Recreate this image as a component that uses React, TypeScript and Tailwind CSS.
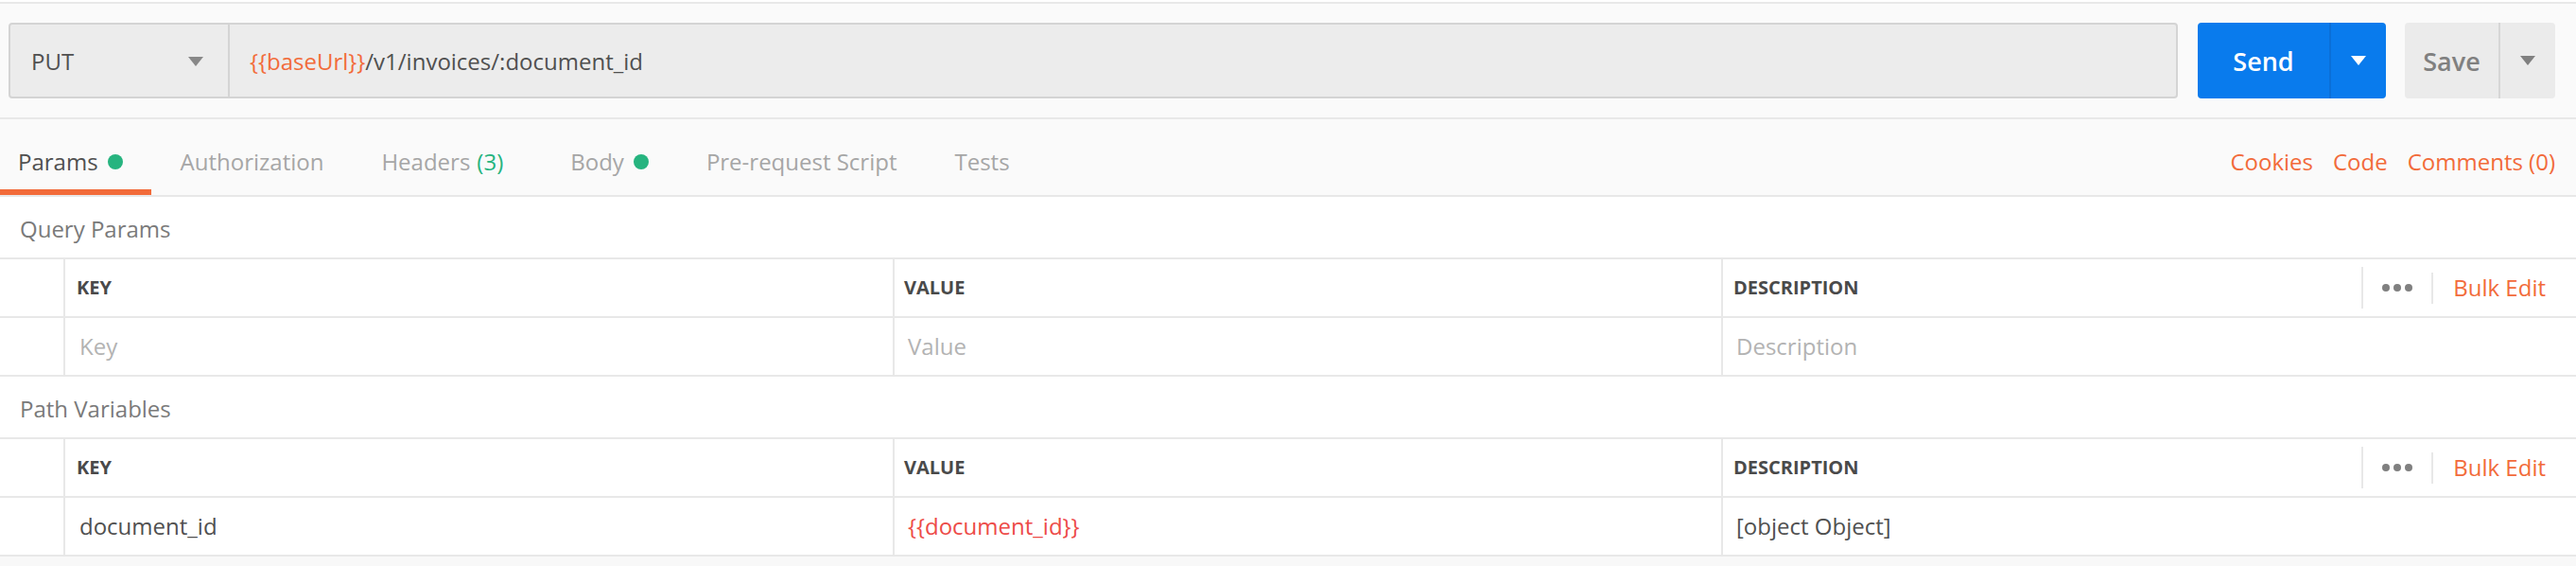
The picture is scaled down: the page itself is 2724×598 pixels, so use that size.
import React from "react";

const Caret = ({ color }: { color: string }) => (
  <svg width="16" height="10" viewBox="0 0 16 10">
    <polygon points="0,0 16,0 8,10" fill={color} />
  </svg>
);

const Dots = () => (
  <div className="flex items-center gap-[4px]">
    <span className="w-[8px] h-[8px] rounded-full bg-[#808080]" />
    <span className="w-[8px] h-[8px] rounded-full bg-[#808080]" />
    <span className="w-[8px] h-[8px] rounded-full bg-[#808080]" />
  </div>
);

type Row = { key: React.ReactNode; value: React.ReactNode; description: React.ReactNode };

const ParamTable = ({ title, row }: { title: string; row: Row }) => (
  <div className="bg-white">
    <div className="h-[64px] flex items-center pl-[21px] pt-[4px] text-[#7a7a7a]">{title}</div>
    <div className="border-y-2 border-[#e8e8e8]">
      {/* header */}
      <div className="flex h-[62px] border-b-2 border-[#e8e8e8] text-[20px] font-bold text-[#4a4a4a]">
        <div className="w-[67px]" />
        <div className="w-[877px] border-l-2 border-[#e8e8e8] flex items-center pl-[12px]">KEY</div>
        <div className="w-[876px] border-l-2 border-[#e8e8e8] flex items-center pl-[10px]">VALUE</div>
        <div className="flex-1 border-l-2 border-[#e8e8e8] flex items-center pl-[11px]">
          <span>DESCRIPTION</span>
          <div className="ml-auto flex items-center pr-[32px] font-normal text-[24px]">
            <span className="w-[2px] h-[44px] bg-[#e8e8e8]" />
            <div className="mx-[20px]">
              <Dots />
            </div>
            <span className="w-[2px] h-[33px] bg-[#e8e8e8]" />
            <span className="ml-[21px] text-[#f26b3a]">Bulk Edit</span>
          </div>
        </div>
      </div>
      {/* row */}
      <div className="flex h-[60px]">
        <div className="w-[67px]" />
        <div className="w-[877px] border-l-2 border-[#e8e8e8] flex items-center pl-[15px]">{row.key}</div>
        <div className="w-[876px] border-l-2 border-[#e8e8e8] flex items-center pl-[14px]">{row.value}</div>
        <div className="flex-1 border-l-2 border-[#e8e8e8] flex items-center pl-[14px]">{row.description}</div>
      </div>
    </div>
  </div>
);

const tabs = [
  { label: "Params", dot: true, active: true },
  { label: "Authorization" },
  { label: "Headers", count: "(3)" },
  { label: "Body", dot: true },
  { label: "Pre-request Script" },
  { label: "Tests" },
];

export default function App() {
  return (
    <div className="w-[2724px] h-[598px] overflow-hidden bg-white pt-[2px] font-['Open_Sans','Liberation_Sans',sans-serif] text-[24px] text-[#505050]">
      {/* request bar */}
      <div className="h-[122px] flex items-center border-t-2 border-[#e8e8e8] bg-[#fafafa] pl-[9px] pr-[22px]">
        <div className="flex-1 h-[80px] flex border-2 border-[#d4d4d4] rounded-[4px] bg-[#ececec]">
          <div className="w-[232px] border-r-2 border-[#d4d4d4] flex items-center pl-[22px] pr-[26px] pt-[2px]">
            <span>PUT</span>
            <span className="ml-auto">
              <Caret color="#888888" />
            </span>
          </div>
          <div className="flex items-center pl-[21px] pt-[2px]">
            <span className="text-[#f26b3a]">{"{{baseUrl}}"}</span>
            <span>/v1/invoices/:document_id</span>
          </div>
        </div>
        <div className="ml-[21px] h-[80px] flex rounded-[4px] bg-[#097bed] text-white text-[27px] font-semibold overflow-hidden">
          <div className="w-[139px] flex items-center justify-center pt-[2px]">Send</div>
          <div className="w-[60px] border-l-2 border-[#0a6fd8] flex items-center justify-center">
            <Caret color="#ffffff" />
          </div>
        </div>
        <div className="ml-[20px] h-[80px] flex rounded-[4px] bg-[#ebebeb] text-[#808080] text-[27px] font-semibold">
          <div className="w-[99px] flex items-center justify-center pt-[2px]">Save</div>
          <div className="w-[60px] border-l-2 border-[#d6d6d6] flex items-center justify-center">
            <Caret color="#808080" />
          </div>
        </div>
      </div>

      {/* tabs */}
      <div className="h-[84px] flex border-y-2 border-[#e8e8e8] bg-[#fafafa]">
        {tabs.map((t, i) => (
          <div
            key={t.label}
            className={`flex items-center pt-[16px] border-b-[6px] ${i === 0 ? "pl-[19px]" : "pl-[31px]"} ${
              t.count ? "pr-[40px]" : "pr-[30px]"
            } ${t.active ? "border-[#f26b3a] text-[#505050]" : "border-transparent text-[#a6a6a6]"}`}
          >
            <span>{t.label}</span>
            {t.count && <span className="ml-[7px] text-[#26b47f]">{t.count}</span>}
            {t.dot && <span className="ml-[10px] w-[16px] h-[16px] rounded-full bg-[#26b47f]" />}
          </div>
        ))}
        <div className="ml-auto flex items-center gap-[21px] pr-[22px] pt-[10px] text-[#f26b3a]">
          <span>Cookies</span>
          <span>Code</span>
          <span>Comments (0)</span>
        </div>
      </div>

      <ParamTable
        title="Query Params"
        row={{
          key: <span className="text-[#b3b3b3]">Key</span>,
          value: <span className="text-[#b3b3b3]">Value</span>,
          description: <span className="text-[#b3b3b3]">Description</span>,
        }}
      />
      <ParamTable
        title="Path Variables"
        row={{
          key: "document_id",
          value: <span className="text-[#ed4b48]">{"{{document_id}}"}</span>,
          description: "[object Object]",
        }}
      />
      <div className="h-[10px] bg-[#f8f8f8]" />
    </div>
  );
}
